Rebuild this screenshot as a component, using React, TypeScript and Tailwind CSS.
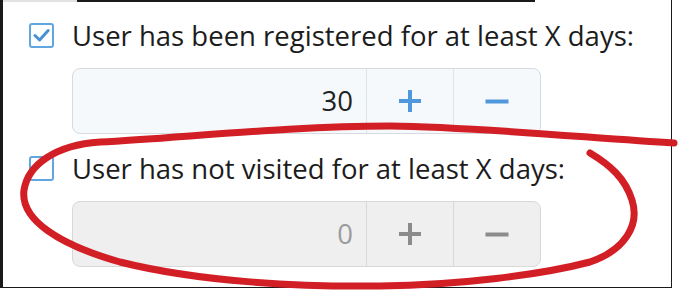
import React from "react";

const font = { fontFamily: '"Open Sans", "Noto Sans", sans-serif' };

function Plus({ color }: { color: string }) {
  return (
    <svg width="24" height="24" viewBox="0 0 24 24">
      <path d="M12 1V23M1 12H23" stroke={color} strokeWidth="4" fill="none" />
    </svg>
  );
}

function Minus({ color }: { color: string }) {
  return (
    <svg width="24" height="24" viewBox="0 0 24 24">
      <path d="M0.5 12.5H23.5" stroke={color} strokeWidth="4" fill="none" />
    </svg>
  );
}

function Checkbox({ checked }: { checked: boolean }) {
  return (
    <div className="w-[25px] h-[25px] shrink-0 rounded-[3px] border-[2.5px] border-[#62a6e0] bg-white flex items-center justify-center">
      {checked && (
        <svg width="20" height="20" viewBox="0 0 20 20" className="-mt-[1px]">
          <path d="M3 10.5L7.6 15L16.2 5.5" stroke="#4a91d3" strokeWidth="3" fill="none" strokeLinecap="round" strokeLinejoin="round" />
        </svg>
      )}
    </div>
  );
}

function Stepper({ value, disabled }: { value: string; disabled: boolean }) {
  const bg = disabled ? "bg-[#efefef]" : "bg-[#f6f9fc]";
  const border = disabled ? "border-[#d8d8d8]" : "border-[#d5dbe1]";
  const divider = disabled ? "border-[#d8d8d8]" : "border-[#dfe4e9]";
  const icon = disabled ? "#8b8b8b" : "#4f98dc";
  return (
    <div className={`ml-[43px] w-[469px] h-[66px] flex rounded-[8px] border ${border} ${bg}`}>
      <div
        className={`w-[293px] flex items-center justify-end pr-[13px] text-[27.5px] leading-none ${disabled ? "text-[#9b9b9b]" : "text-[#222]"}`}
        style={font}
      >
        {value}
      </div>
      <div className={`w-[87px] flex items-center justify-center border-l ${divider}`}>
        <Plus color={icon} />
      </div>
      <div className={`flex-1 flex items-center justify-center border-l ${divider}`}>
        <Minus color={icon} />
      </div>
    </div>
  );
}

function Row({ checked, label }: { checked: boolean; label: string }) {
  return (
    <div className="flex items-center h-[25px]">
      <Checkbox checked={checked} />
      <span className="ml-[18px] text-[27.5px] leading-none text-[#1c1c1c] whitespace-nowrap" style={font}>
        {label}
      </span>
    </div>
  );
}

export default function App() {
  return (
    <div className="w-[679px] h-[300px] bg-white overflow-hidden">
      <div className="relative w-[672px] h-[288px] bg-white border-l-[3px] border-r border-b border-[#1a1a1a]">
        <div className="flex h-[2px]">
          <div className="w-[74px] bg-[#e2e2e2]" />
          <div className="w-[458px] bg-[#1a1a1a]" />
          <div className="flex-1 bg-white" />
        </div>
        <div className="pl-[26px] pt-[21px]">
          <Row checked={true} label="User has been registered for at least X days:" />
          <div className="mt-[20px]">
            <Stepper value="30" disabled={false} />
          </div>
          <div className="mt-[22px]">
            <Row checked={false} label="User has not visited for at least X days:" />
          </div>
          <div className="mt-[20px]">
            <Stepper value="0" disabled={true} />
          </div>
        </div>
      </div>
      <svg className="absolute left-0 top-0 pointer-events-none" width="679" height="300" viewBox="0 0 679 300">
        <path
          d="M674 143 C600 139, 480 127, 390 126 C290 126, 180 138, 100 142 C55 145, 28 165, 24 190 C20 220, 60 245, 120 262 C200 282, 300 287, 380 286 C460 285, 540 275, 590 262 C625 250, 640 225, 632 200 C625 178, 610 165, 590 153"
          stroke="#d21f26"
          strokeWidth="7"
          fill="none"
          strokeLinecap="round"
          strokeLinejoin="round"
        />
      </svg>
    </div>
  );
}
